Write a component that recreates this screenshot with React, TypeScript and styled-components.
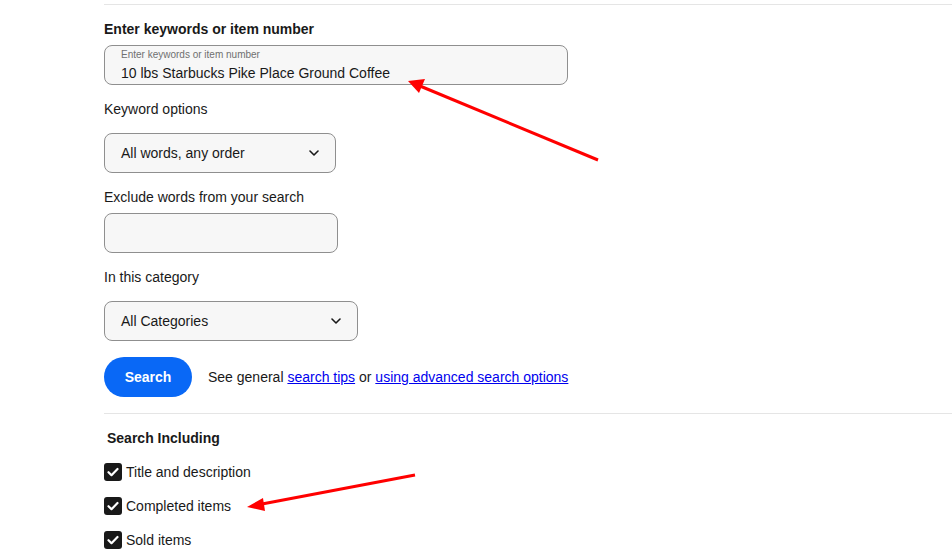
import React from "react";
import styled, { createGlobalStyle } from "styled-components";

const Global = createGlobalStyle`
  html, body { margin: 0; padding: 0; background: #fff; }
  body { font-family: "Liberation Sans", Arial, sans-serif; color: #191919; }
  * { box-sizing: border-box; }
`;

const Page = styled.div`
  position: relative;
  width: 952px;
  height: 557px;
  overflow: hidden;
  padding-top: 4px;
  padding-left: 104px;
`;

const Divider = styled.hr<{ $top?: number }>`
  border: 0;
  border-top: 1px solid #e5e5e5;
  margin: ${(p) => p.$top ?? 0}px 0 0 0;
  height: 0;
`;

const Form = styled.div`
  display: flex;
  flex-direction: column;
  align-items: flex-start;
`;

const Heading = styled.h2<{ $top: number; $indent?: number }>`
  margin: ${(p) => p.$top}px 0 0 ${(p) => p.$indent ?? 0}px;
  font-size: 14px;
  line-height: 20px;
  font-weight: 700;
`;

const Label = styled.label<{ $top: number }>`
  display: block;
  margin-top: ${(p) => p.$top}px;
  font-size: 14px;
  line-height: 20px;
`;

const Field = styled.div<{ $w: number; $top: number }>`
  width: ${(p) => p.$w}px;
  height: 40px;
  margin-top: ${(p) => p.$top}px;
  border: 1px solid #8f8f8f;
  border-radius: 8px;
  background: #f7f7f7;
  padding: 0 16px;
  display: flex;
  align-items: center;
  justify-content: space-between;
  font-size: 14px;
`;

const FloatField = styled(Field)`
  flex-direction: column;
  align-items: flex-start;
  justify-content: flex-start;
  padding-top: 3px;
`;

const FloatLabel = styled.span`
  font-size: 10px;
  line-height: 12px;
  color: #707070;
`;

const FloatValue = styled.span`
  font-size: 14px;
  line-height: 20px;
  margin-top: 2px;
`;

const Chevron = () => (
  <svg width="10" height="6" viewBox="0 0 10 6">
    <path d="M1 1l4 4 4-4" fill="none" stroke="#191919" strokeWidth="1.6" strokeLinecap="round" strokeLinejoin="round" />
  </svg>
);

const ActionRow = styled.div`
  margin-top: 16px;
  display: flex;
  align-items: center;
  gap: 16px;
  font-size: 14px;
`;

const PrimaryButton = styled.button`
  width: 88px;
  height: 40px;
  border: 0;
  border-radius: 20px;
  background: #0968f6;
  color: #fff;
  font-family: inherit;
  font-size: 14px;
  font-weight: 700;
`;

const Link = styled.a`
  color: #0000ee;
  text-decoration: underline;
`;

const CheckList = styled.div`
  margin-top: 15px;
  display: flex;
  flex-direction: column;
  gap: 16px;
`;

const CheckRow = styled.div`
  display: flex;
  align-items: center;
  gap: 4px;
  font-size: 14px;
  line-height: 18px;
`;

const Box = styled.span`
  width: 18px;
  height: 18px;
  border-radius: 3px;
  background: #191919;
  display: inline-flex;
  align-items: center;
  justify-content: center;
`;

const Overlay = styled.svg`
  position: absolute;
  left: 0;
  top: 0;
  pointer-events: none;
`;

const Check = ({ children }: { children: React.ReactNode }) => (
  <CheckRow>
    <Box>
      <svg width="12" height="10" viewBox="0 0 12 10">
        <path d="M1.5 5.2l3 3 6-6.2" fill="none" stroke="#fff" strokeWidth="2.2" strokeLinecap="round" strokeLinejoin="round" />
      </svg>
    </Box>
    {children}
  </CheckRow>
);

export default function App() {
  return (
    <>
      <Global />
      <Page>
        <Divider />
        <Form>
          <Heading $top={14}>Enter keywords or item number</Heading>
          <FloatField $w={464} $top={6}>
            <FloatLabel>Enter keywords or item number</FloatLabel>
            <FloatValue>10 lbs Starbucks Pike Place Ground Coffee</FloatValue>
          </FloatField>
          <Label $top={14}>Keyword options</Label>
          <Field $w={232} $top={14}>
            All words, any order
            <Chevron />
          </Field>
          <Label $top={14}>Exclude words from your search</Label>
          <Field $w={234} $top={6} />
          <Label $top={14}>In this category</Label>
          <Field $w={254} $top={14}>
            All Categories
            <Chevron />
          </Field>
          <ActionRow>
            <PrimaryButton>Search</PrimaryButton>
            <span>
              See general <Link href="#">search tips</Link> or{" "}
              <Link href="#">using advanced search options</Link>
            </span>
          </ActionRow>
        </Form>
        <Divider $top={16} />
        <Heading $top={14} $indent={3}>Search Including</Heading>
        <CheckList>
          <Check>Title and description</Check>
          <Check>Completed items</Check>
          <Check>Sold items</Check>
        </CheckList>
        <Overlay width="952" height="557">
          <line x1="598" y1="160" x2="420" y2="86" stroke="#ff0000" strokeWidth="3" />
          <polygon points="408,81 425,79 419,93" fill="#ff0000" />
          <line x1="415" y1="475" x2="262" y2="504" stroke="#ff0000" strokeWidth="3" />
          <polygon points="247,507 263,498 265,511" fill="#ff0000" />
        </Overlay>
      </Page>
    </>
  );
}
